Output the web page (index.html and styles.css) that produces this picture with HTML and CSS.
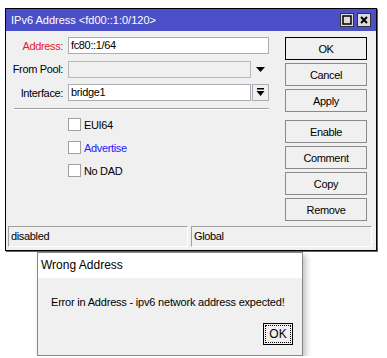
FILE: index.html
```html
<!DOCTYPE html>
<html lang="en">
  <head>
    <meta charset="UTF-8" />
    <title>IPv6 Address</title>
    <link rel="stylesheet" href="styles.css">
  </head>
  <body>
    <div class="window">
      <div class="titlebar">
        <span class="title">IPv6 Address &lt;fd00::1:0/120&gt;</span>
        <div class="title-buttons">
          <span class="tbtn">
            <svg width="10" height="10" viewBox="0 0 10 10"><rect x="1" y="1" width="8" height="8" fill="none" stroke="#000" stroke-width="1.5"/></svg>
          </span>
          <span class="tbtn">
            <svg width="10" height="10" viewBox="0 0 10 10"><path d="M2 2L8 8M8 2L2 8" stroke="#000" stroke-width="2"/></svg>
          </span>
        </div>
      </div>

      <div class="content">
        <div class="form">
          <div class="rows">
            <div class="row">
              <label class="req">Address:</label>
              <div class="input">fc80::1/64</div>
            </div>
            <div class="row">
              <label>From Pool:</label>
              <div class="field-with-btn">
                <div class="input disabled"></div>
                <span class="drop">
                  <svg width="9" height="5" viewBox="0 0 9 5"><polygon points="0,0 9,0 4.5,5" fill="#000"/></svg>
                </span>
              </div>
            </div>
            <div class="row">
              <label>Interface:</label>
              <div class="field-with-btn">
                <div class="input">bridge1</div>
                <span class="drop-btn">
                  <svg width="9" height="9" viewBox="0 0 9 9"><rect x="1" y="0" width="7" height="1.5" fill="#000"/><polygon points="0.5,3 8.5,3 4.5,8" fill="#000"/></svg>
                </span>
              </div>
            </div>
          </div>

          <hr class="sep">

          <!-- options -->
          <div class="checks">
            <div class="check"><span class="box"></span><span>EUI64</span></div>
            <div class="check"><span class="box"></span><span class="blue">Advertise</span></div>
            <div class="check"><span class="box"></span><span>No DAD</span></div>
          </div>
        </div>

        <div class="buttons">
          <div class="group">
            <div class="btn default">OK</div>
            <div class="btn">Cancel</div>
            <div class="btn">Apply</div>
          </div>
          <div class="group">
            <div class="btn">Enable</div>
            <div class="btn">Comment</div>
            <div class="btn">Copy</div>
            <div class="btn">Remove</div>
          </div>
        </div>
      </div>

      <div class="statusbar">
        <div class="status-cell first">disabled</div>
        <div class="status-cell">Global</div>
      </div>
    </div>

    <!-- error popup -->
    <div class="dialog">
      <div class="dialog-title">Wrong Address</div>
      <div class="dialog-body">
        <div class="message">Error in Address - ipv6 network address expected!</div>
        <div class="ok-btn"><span>OK</span></div>
      </div>
    </div>
  </body>
</html>
```

FILE: styles.css
```css
body {
  margin: 0;
  background: #fff;
  font-family: 'Liberation Sans', Arial, sans-serif;
  font-size: 11px;
  color: #000;
}

.window {
  margin: 8px 0 0 5px;
  width: 372px;
  height: 243px;
  box-sizing: border-box;
  border: 1px solid #000;
  background: #f0f0f0;
  box-shadow: 1px 1px 0 rgba(0, 0, 0, 0.6);
  display: flex;
  flex-direction: column;
}

.titlebar {
  height: 22px;
  background: #4b50c8;
  color: #fff;
  display: flex;
  align-items: center;
  padding: 0 5px;
  font-size: 11px;
}

.title-buttons {
  margin-left: auto;
  display: flex;
  gap: 3px;
}

.tbtn {
  width: 14px;
  height: 14px;
  box-sizing: border-box;
  border: 1px solid #333;
  background: #dcdcdc;
  display: flex;
  align-items: center;
  justify-content: center;
}

.content {
  display: flex;
  height: 195px;
  padding-top: 6px;
  box-sizing: border-box;
  letter-spacing: -0.35px;
}

.form {
  width: 263px;
}

.rows {
  display: flex;
  flex-direction: column;
  gap: 6.5px;
}

.row {
  display: grid;
  grid-template-columns: 57px 1fr;
  column-gap: 5px;
  align-items: center;
  height: 17px;
}

.row label {
  text-align: right;
}

.row label.req {
  color: #e8202a;
}

.input {
  height: 17px;
  box-sizing: border-box;
  border: 1px solid #abadb3;
  background: #fff;
  padding: 0 2px;
  line-height: 15px;
}

.input.disabled {
  background: #f0f0f0;
  border-color: #b9b9b9;
}

.field-with-btn {
  display: grid;
  grid-template-columns: 183px 17px;
  column-gap: 1px;
  height: 17px;
}

.drop {
  display: flex;
  align-items: center;
  justify-content: center;
}

.drop-btn {
  box-sizing: border-box;
  border: 1px solid #abadb3;
  background: #f0f0f0;
  display: flex;
  align-items: center;
  justify-content: center;
}

.sep {
  margin: 7px 0 0 8px;
  height: 0;
  border: 0;
  border-top: 1px solid #a0a0a0;
  border-bottom: 1px solid #fff;
}

.checks {
  margin: 8px 0 0 62px;
  display: flex;
  flex-direction: column;
  gap: 10px;
}

.check {
  display: flex;
  align-items: center;
  gap: 3px;
  height: 13px;
}

.box {
  width: 13px;
  height: 13px;
  box-sizing: border-box;
  border: 1px solid #a0a0a0;
  background: #fff;
}

.blue {
  color: #2020ff;
}

.buttons {
  margin-left: 16px;
  width: 82px;
  display: flex;
  flex-direction: column;
  gap: 8px;
}

.group {
  display: flex;
  flex-direction: column;
  gap: 3px;
}

.btn {
  height: 23px;
  box-sizing: border-box;
  border: 1px solid #8a8a8a;
  background: #f0f0f0;
  display: flex;
  align-items: center;
  justify-content: center;
}

.btn.default {
  border-color: #000;
}

.statusbar {
  display: flex;
  gap: 3px;
  height: 21px;
  padding: 0 4px 0 2px;
  letter-spacing: -0.35px;
}

.status-cell {
  flex: 1;
  box-sizing: border-box;
  border-top: 1px solid #a0a0a0;
  border-left: 1px solid #a0a0a0;
  border-right: 1px solid #fff;
  border-bottom: 1px solid #fff;
  padding-left: 2px;
  line-height: 19px;
}

.status-cell.first {
  flex: 0 0 180px;
}

.dialog {
  margin: 1px 0 0 37px;
  width: 266px;
  height: 104px;
  box-sizing: border-box;
  border: 1px solid #888;
  background: #f0f0f0;
  box-shadow: 3px 3px 6px rgba(0, 0, 0, 0.25);
  display: flex;
  flex-direction: column;
}

.dialog-title {
  background: #fff;
  height: 25px;
  line-height: 25px;
  padding-left: 3px;
  font-size: 12px;
}

.dialog-body {
  flex: 1;
  display: flex;
  flex-direction: column;
  padding: 17px 9px 0 13px;
}

.message {
  line-height: 14px;
  letter-spacing: -0.2px;
}

.ok-btn {
  align-self: flex-end;
  margin-top: 14px;
  width: 30px;
  height: 22px;
  box-sizing: border-box;
  border: 1px solid #000;
  background: #f0f0f0;
  padding: 1px;
  display: flex;
  font-size: 12px;
}

.ok-btn span {
  flex: 1;
  border: 1px dotted #000;
  display: flex;
  align-items: center;
  justify-content: center;
}
```
